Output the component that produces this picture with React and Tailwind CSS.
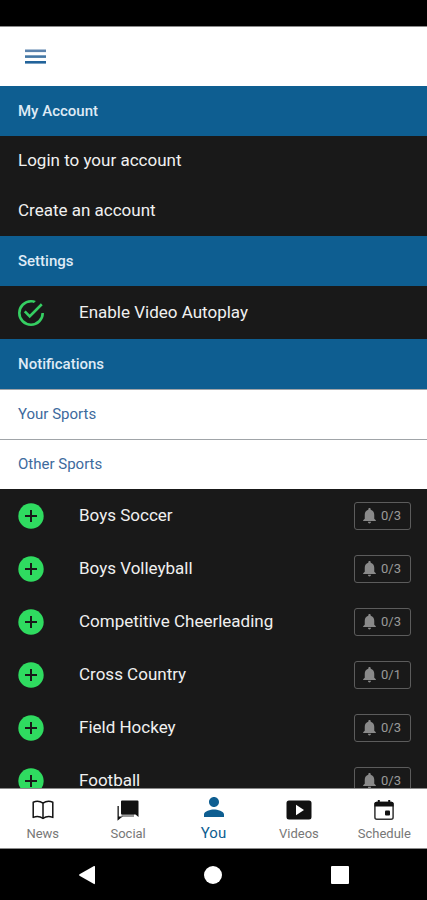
import { MdNotifications, MdPerson } from 'react-icons/md';
import { clsx } from 'clsx';

const sports = [
  { name: 'Boys Soccer', enabled: 0, total: 3 },
  { name: 'Boys Volleyball', enabled: 0, total: 3 },
  { name: 'Competitive Cheerleading', enabled: 0, total: 3 },
  { name: 'Cross Country', enabled: 0, total: 1 },
  { name: 'Field Hockey', enabled: 0, total: 3 },
  { name: 'Football', enabled: 0, total: 3 },
];

function MenuIcon() {
  return (
    <svg width="21" height="15" viewBox="0 0 21 15">
      <rect y="0.500" width="21" height="2.600" fill="#5c83ad" />
      <rect y="6.300" width="21" height="2.600" fill="#4477a5" />
      <rect y="12" width="21" height="2.600" fill="#22639a" />
    </svg>
  );
}

function CheckCircleIcon({ className }) {
  return (
    <svg viewBox="2 2 20 20" fill="currentColor" className={className}>
      <path d="M20,12A8,8 0 0,1 12,20A8,8 0 0,1 4,12A8,8 0 0,1 12,4C12.76,4 13.5,4.11 14.2,4.31L15.77,2.74C14.61,2.26 13.34,2 12,2A10,10 0 0,0 2,12A10,10 0 0,0 12,22A10,10 0 0,0 22,12M7.91,10.08L6.5,11.5L11,16L21,6L19.59,4.58L11,13.17L7.91,10.08Z" />
    </svg>
  );
}

function AddCircleIcon({ className }) {
  return (
    <svg viewBox="0 0 26 26" className={className}>
      <circle cx="13" cy="13" r="12.700" fill="currentColor" />
      <path d="M13 7V19M7 13H19" stroke="#191919" strokeWidth="2" />
    </svg>
  );
}

function NewsIcon() {
  return (
    <svg width="22" height="20" viewBox="0 0 22 20" fill="none" stroke="currentColor" strokeWidth="1.5" strokeLinejoin="round">
      <path d="M11 3.2C8.2 1.2 4.200 1 1.200 2.200V17.400C4.200 16.300 8.200 16.500 11 18.400C13.800 16.500 17.800 16.300 20.800 17.400V2.200C17.800 1 13.800 1.200 11 3.200Z" />
      <path d="M11 3.200V18.400" />
    </svg>
  );
}

function SocialIcon() {
  return (
    <svg width="22" height="21" viewBox="0 0 22 21" fill="currentColor">
      <path d="M4.500 14H17V17H4.500Z" fill="#999" />
      <path d="M5 0.500H20.500Q21.500 0.500 21.500 1.500V17L18.500 14.500H5Q4 14.500 4 13.500V1.500Q4 0.500 5 0.500Z" />
      <path d="M0.500 6H1.800V16.500H6L4 17.800L0.500 20.800Z" />
    </svg>
  );
}

function VideosIcon() {
  return (
    <svg width="26" height="20" viewBox="0 0 26 20" fill="currentColor">
      <path fillRule="evenodd" d="M3 0.500H23Q25.500 0.500 25.500 3V17Q25.500 19.500 23 19.500H3Q0.500 19.500 0.500 17V3Q0.500 0.500 3 0.500ZM10 4.800V15.200L18 10Z" />
    </svg>
  );
}

function ScheduleIcon() {
  return (
    <svg width="20" height="20" viewBox="0 0 20 20" fill="none">
      <rect x="0.900" y="2.500" width="18.200" height="16.700" rx="2" stroke="#333" strokeWidth="1.500" />
      <path d="M0.500 6.500V3.500Q0.500 1.700 2.500 1.700H17.500Q19.500 1.700 19.500 3.500V6.500Z" fill="#111" />
      <path d="M4.800 0V3M15.200 0V3" stroke="#111" strokeWidth="2" />
      <rect x="11" y="10.500" width="5" height="5" rx="1" fill="#111" />
    </svg>
  );
}

const tabs = [
  { label: 'News', icon: <NewsIcon /> },
  { label: 'Social', icon: <SocialIcon /> },
  { label: 'You', icon: <MdPerson size={30} />, active: true },
  { label: 'Videos', icon: <VideosIcon /> },
  { label: 'Schedule', icon: <ScheduleIcon /> },
];

function SectionHeader({ children }) {
  return (
    <h2 className="flex h-[50px] items-center bg-[#0e5e91] px-[18px] text-[15px] font-medium text-[#dfeaf5]">
      {children}
    </h2>
  );
}

function SubHeader({ children }) {
  return (
    <h3 className="flex h-[50px] items-center border-t border-[#a0a4a8] bg-white px-[18px] text-[15px] text-[#3d6a9d]">
      {children}
    </h3>
  );
}

function SportRow({ sport }) {
  return (
    <li className="flex h-[53px] items-center pr-4 pl-[18px]">
      <button aria-label={`Add ${sport.name}`} className="text-[#2fdb60]">
        <AddCircleIcon className="size-[26px]" />
      </button>
      <span className="ml-[35px] flex-1">{sport.name}</span>
      <button
        aria-label={`${sport.name} notifications`}
        className="flex h-7 w-[57px] items-center justify-center gap-0.5 rounded-[3px] border border-[#5c5c5c] pr-1 text-[13px] text-[#9a9a9a]"
      >
        <MdNotifications size={19} className="text-[#8a8a8a]" />
        {sport.enabled}/{sport.total}
      </button>
    </li>
  );
}

export default function App() {
  return (
    <div className="flex h-screen flex-col bg-[#191919] font-['Roboto',sans-serif] text-[17px] text-[#f0f0f0]">
      {/* Status bar */}
      <div className="h-[26px] shrink-0 bg-black" />

      {/* Header */}
      <header className="flex h-[60px] shrink-0 items-center border-t border-[#8a8a8a] bg-white px-[25px]">
        <button aria-label="Menu">
          <MenuIcon />
        </button>
      </header>

      <main className="min-h-0 flex-1 overflow-y-auto [scrollbar-width:none]">
        <SectionHeader>My Account</SectionHeader>
        <a href="#login" className="flex h-[50px] items-center px-[18px]">Login to your account</a>
        <a href="#create" className="flex h-[50px] items-center px-[18px]">Create an account</a>

        <SectionHeader>Settings</SectionHeader>
        <button className="flex h-[53px] w-full items-center px-[18px]">
          <CheckCircleIcon className="size-[26px] text-[#35cf62]" />
          <span className="ml-[35px]">Enable Video Autoplay</span>
        </button>

        <SectionHeader>Notifications</SectionHeader>
        <SubHeader>Your Sports</SubHeader>
        <SubHeader>Other Sports</SubHeader>
        <ul>
          {sports.map((sport) => (
            <SportRow key={sport.name} sport={sport} />
          ))}
        </ul>
      </main>

      {/* Bottom tabs */}
      <nav className="flex h-[61px] shrink-0 border-y border-[#8a8a8a] bg-white">
        {tabs.map((tab) => (
          <a
            key={tab.label}
            href={`#${tab.label.toLowerCase()}`}
            className={clsx(
              'flex flex-1 flex-col items-center',
              tab.active ? 'pt-1 text-[15px] text-[#0e5e91]' : 'pt-[7px] text-[13px] text-[#111]'
            )}
          >
            <span className="flex h-7 items-center">{tab.icon}</span>
            <span className={clsx(tab.active ? 'leading-6' : 'leading-5 text-[#777]')}>{tab.label}</span>
          </a>
        ))}
      </nav>

      {/* System navigation */}
      <div className="flex h-[51px] shrink-0 items-center justify-around bg-black px-6 text-white">
        <button aria-label="Back">
          <svg width="18" height="20" viewBox="0 0 18 20" fill="currentColor">
            <path d="M16 1Q17 0.500 17 2V18Q17 19.500 16 19L1.500 10.800Q0.500 10 1.500 9.200Z" />
          </svg>
        </button>
        <button aria-label="Home" className="size-[18px] rounded-full bg-white" />
        <button aria-label="Recents" className="size-[18px] rounded-[1px] bg-white" />
      </div>
    </div>
  );
}
